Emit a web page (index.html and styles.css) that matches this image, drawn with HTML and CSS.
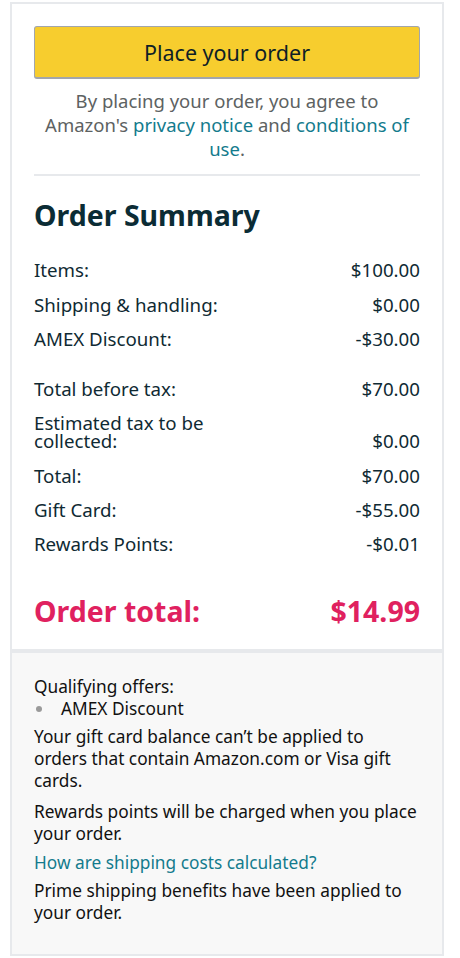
FILE: index.html
```html
<!DOCTYPE html>
<html lang="en">
<head>
<meta charset="utf-8">
<title>Order Summary</title>
<link rel="stylesheet" href="styles.css">
</head>
<body>
<div class="card">
  <section class="main">
    <button class="place-btn" type="button">Place your order</button>
    <p class="agree">By placing your order, you agree to Amazon's <a href="#">privacy notice</a> and <a href="#">conditions of use</a>.</p>
    <hr class="divider">
    <h2 class="title">Order Summary</h2>
    <div class="rows">
      <div class="row"><span>Items:</span><span>$100.00</span></div>
      <div class="row"><span>Shipping &amp; handling:</span><span>$0.00</span></div>
      <div class="row"><span>AMEX Discount:</span><span>-$30.00</span></div>
    </div>
    <div class="rows group2">
      <div class="row"><span>Total before tax:</span><span>$70.00</span></div>
      <div class="row tax"><span class="narrow">Estimated tax to be collected:</span><span>$0.00</span></div>
      <div class="row"><span>Total:</span><span>$70.00</span></div>
      <div class="row"><span>Gift Card:</span><span>-$55.00</span></div>
      <div class="row"><span>Rewards Points:</span><span>-$0.01</span></div>
    </div>
    <div class="grand"><span>Order total:</span><span>$14.99</span></div>
  </section>
  <section class="notes">
    <div class="offers">
      <div>Qualifying offers:</div>
      <ul class="bullets"><li>AMEX Discount</li></ul>
    </div>
    <p class="gift-p">Your gift card balance can’t be applied to orders that contain Amazon.com or Visa gift cards.</p>
    <p class="rewards-p">Rewards points will be charged when you place your order.</p>
    <p class="link-p"><a href="#">How are shipping costs calculated?</a></p>
    <p class="prime-p">Prime shipping benefits have been applied to your order.</p>
  </section>
</div>
</body>
</html>
```
FILE: styles.css
```css
* { box-sizing: border-box; }
body {
  margin: 0;
  background: #fff;
  font-family: "Noto Sans", "Open Sans", sans-serif;
  color: #0f2a33;
}
.card {
  margin: 2px 16px 3px 10px;
  border: 2px solid #e7e9ec;
}
.main {
  padding: 22px 22px 21px;
}
.place-btn {
  display: block;
  width: 100%;
  height: 53px;
  border: 1px solid #a2a6ac;
  border-bottom-width: 2px;
  border-radius: 3px;
  background: #f7cd2e;
  font-family: inherit;
  font-size: 21.5px;
  color: #0f1f26;
  padding: 0;
}
.agree {
  margin: 10px 0 13px;
  text-align: center;
  font-size: 18.5px;
  line-height: 24px;
  color: #5d6262;
}
.agree a { color: #137b8d; text-decoration: none; }
.divider {
  margin: 0;
  border: 0;
  border-top: 2px solid #e7e9ec;
}
.title {
  margin: 22px 0 27px;
  font-size: 28.5px;
  line-height: 34px;
  font-weight: 700;
  color: #0b2c35;
}
.rows { display: flex; flex-direction: column; gap: 12px; }
.group2 { margin-top: 27px; gap: 11.5px; }
.row {
  display: flex;
  justify-content: space-between;
  font-size: 18.7px;
  line-height: 22.5px;
}
.row.tax { align-items: flex-end; line-height: 18px; padding: 2px 0 4px; }
.narrow { max-width: 200px; }
.grand {
  margin-top: 38px;
  display: flex;
  justify-content: space-between;
  font-size: 28.5px;
  line-height: 34px;
  font-weight: 700;
  color: #e0215f;
}
.notes {
  border-top: 4px solid #e7e9ec;
  background: #f8f8f8;
  padding: 23px 22px 30px;
  font-size: 17.3px;
  line-height: 22px;
  color: #111;
}
.notes p { margin: 6px 0 0; }
.notes p.rewards-p { margin-top: 9px; }
.notes p.link-p { margin-top: 7px; }
.notes a { color: #137b8d; text-decoration: none; }
.bullets {
  margin: 0;
  padding: 0 0 0 27px;
  list-style: none;
}
.bullets li { position: relative; }
.bullets li::before {
  content: "";
  position: absolute;
  left: -25px;
  top: 8px;
  width: 6px;
  height: 6px;
  border-radius: 50%;
  background: #9a9a9a;
}
```
